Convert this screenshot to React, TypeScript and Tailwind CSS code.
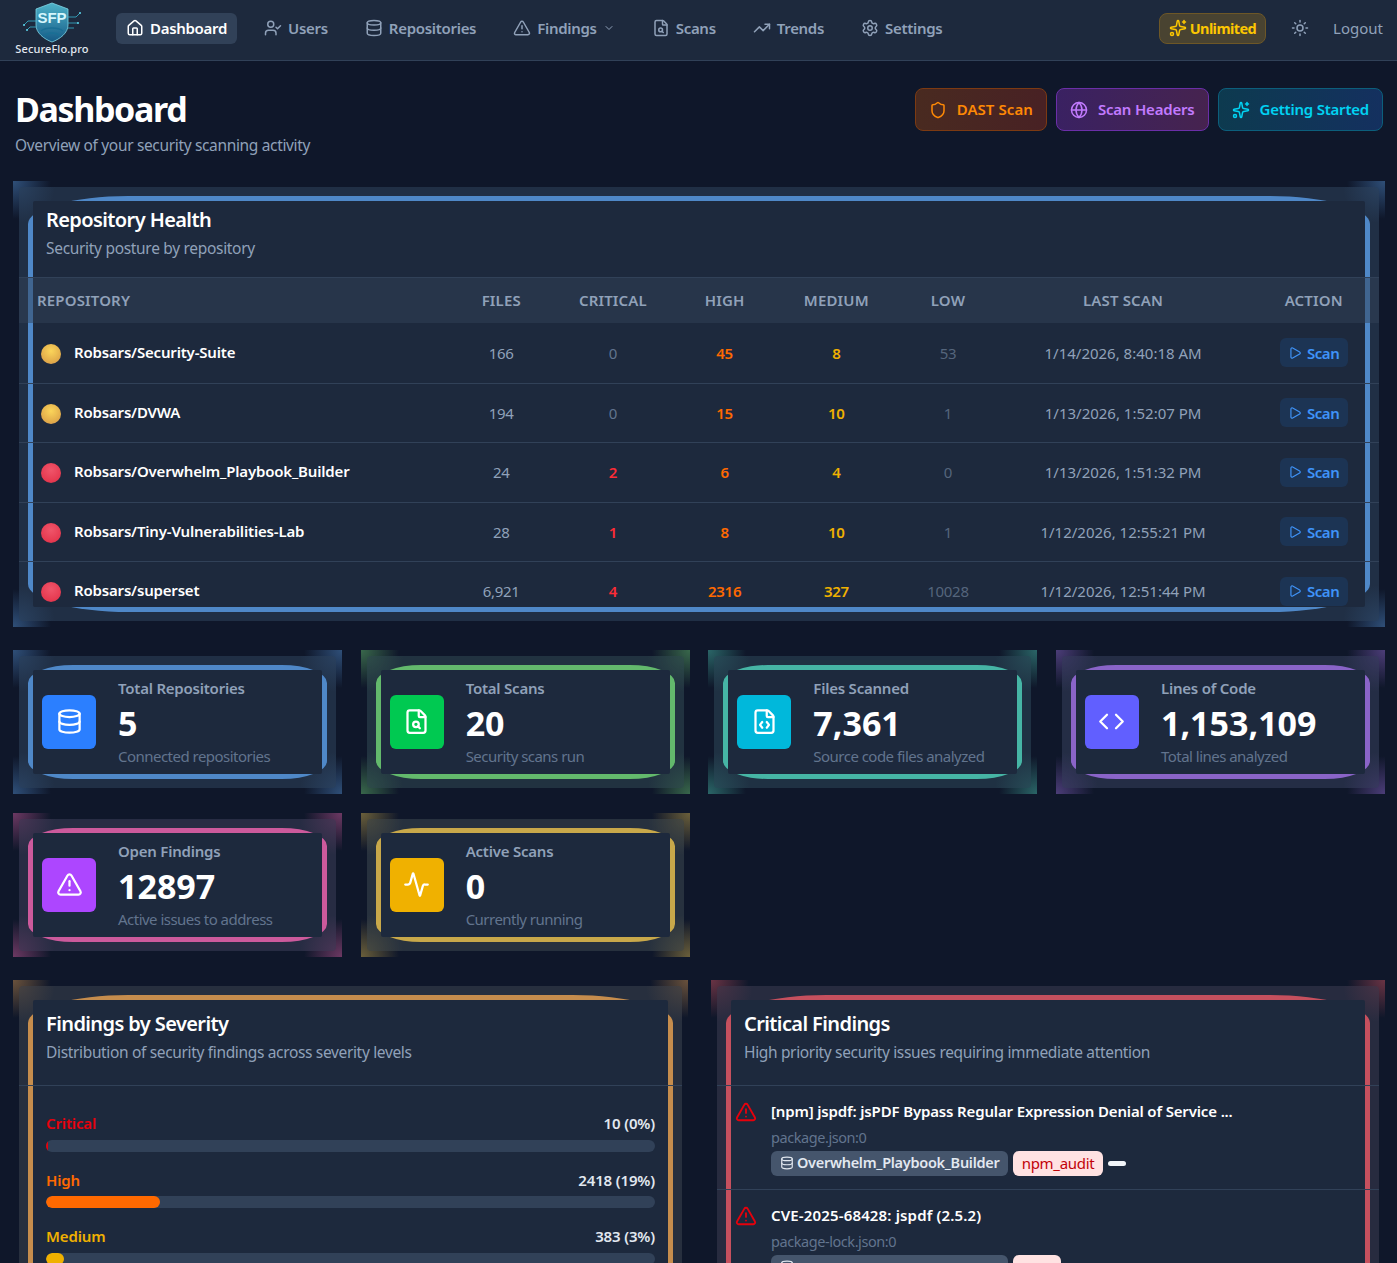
import React from "react";
import { House, UserCheck, Database, TriangleAlert, ChevronDown, FileSearch, TrendingUp, Settings, Sparkles, Sun, Shield, Globe, Play, FileCode, Code, Activity } from "lucide-react";

const glow =
  "bg-[radial-gradient(circle_at_0_0,color-mix(in_srgb,var(--c)_50%,transparent),transparent_38px),radial-gradient(circle_at_100%_0,color-mix(in_srgb,var(--c)_50%,transparent),transparent_38px),radial-gradient(circle_at_0_100%,color-mix(in_srgb,var(--c)_50%,transparent),transparent_38px),radial-gradient(circle_at_100%_100%,color-mix(in_srgb,var(--c)_50%,transparent),transparent_38px)]";
const glowSoft =
  "bg-[radial-gradient(circle_at_0_0,color-mix(in_srgb,var(--c)_20%,transparent),transparent_36px),radial-gradient(circle_at_100%_0,color-mix(in_srgb,var(--c)_20%,transparent),transparent_36px),radial-gradient(circle_at_0_100%,color-mix(in_srgb,var(--c)_20%,transparent),transparent_36px),radial-gradient(circle_at_100%_100%,color-mix(in_srgb,var(--c)_20%,transparent),transparent_36px)]";

function Frame({ tone, shape, className = "", children }: { tone: string; shape: string; className?: string; children: React.ReactNode }) {
  return (
    <div className={`p-[6px] ${glow} ${tone} ${className}`}>
      <div className={`relative h-full overflow-hidden rounded-[4px] bg-[color-mix(in_srgb,var(--c)_6%,#1d293d)] ${glowSoft}`}>
        <div className={`absolute inset-[9px] bg-[var(--c)] ${shape}`} />
        <div className="absolute inset-[14px] rounded-[2px] bg-slate-800" />
        <div className="relative h-full">{children}</div>
      </div>
    </div>
  );
}

function Logo() {
  return (
    <div className="flex w-[76px] flex-col items-center">
      <svg viewBox="0 0 60 42" className="h-[42px] w-[60px]" fill="none">
        <defs>
          <linearGradient id="sh" x1="0" y1="0" x2="0" y2="1">
            <stop offset="0" stopColor="#4fb3c9" />
            <stop offset="1" stopColor="#155a86" />
          </linearGradient>
        </defs>
        <path d="M30 2 L46 8 V24 C46 32 38 38 30 41 C22 38 14 32 14 24 V8 Z" fill="url(#sh)" stroke="#7fd6e6" strokeWidth="0.8" />
        <path d="M19 30 C24 26 36 26 41 30 M22 35 C26 31 34 31 38 35" stroke="#1a6f95" strokeWidth="1.4" />
        <path d="M14 20 H6 L2 24 M14 26 H8 L5 29 M46 16 H54 L58 12 M46 22 H56 M46 27 H52" stroke="#39b5d0" strokeWidth="0.8" />
        <circle cx="2" cy="24" r="1" fill="#5ed7ee" />
        <circle cx="5" cy="29" r="1" fill="#5ed7ee" />
        <circle cx="58" cy="12" r="1" fill="#5ed7ee" />
        <circle cx="56" cy="22" r="1" fill="#5ed7ee" />
        <text x="30" y="22" textAnchor="middle" fontSize="15" fontWeight="700" fill="#d5f6fc" fontFamily="'Liberation Sans',sans-serif">SFP</text>
      </svg>
      <span className="mt-[-1px] whitespace-nowrap text-[11px] leading-[14px] font-medium tracking-[0.01em] text-slate-200">SecureFlo.pro</span>
    </div>
  );
}

function NavItem({ icon, label, active, extra }: { icon: React.ReactNode; label: string; active?: boolean; extra?: React.ReactNode }) {
  return (
    <a className={`flex h-[31px] items-center gap-[6px] rounded-md px-[10px] text-[15px] font-semibold tracking-[-0.02em] ${active ? "bg-slate-700 text-white" : "text-slate-400"}`}>
      {icon}
      <span>{label}</span>
      {extra}
    </a>
  );
}

function Header() {
  const ic = "size-[18px] shrink-0";
  return (
    <header className="flex h-[61px] items-center border-b border-slate-700 bg-slate-800 pb-[4px] pl-[14px] pr-[14px]">
      <Logo />
      <nav className="ml-[26px] flex items-center gap-[17px]">
        <NavItem active icon={<House className={ic} />} label="Dashboard" />
        <NavItem icon={<UserCheck className={ic} />} label="Users" />
        <NavItem icon={<Database className={ic} />} label="Repositories" />
        <NavItem icon={<TriangleAlert className={ic} />} label="Findings" extra={<ChevronDown className="size-3" />} />
        <NavItem icon={<FileSearch className={ic} />} label="Scans" />
        <NavItem icon={<TrendingUp className={ic} />} label="Trends" />
        <NavItem icon={<Settings className={ic} />} label="Settings" />
      </nav>
      <div className="ml-auto flex items-center">
        <div className="flex h-[31px] items-center gap-[3px] rounded-lg border border-[#6d5727] bg-[#494331] px-[9px] text-[14.5px] font-bold tracking-[-0.04em] text-yellow-400">
          <Sparkles className="size-[18px]" />
          <span className="mt-[2px]">Unlimited</span>
        </div>
        <Sun className="ml-[25px] size-[18px] text-slate-400" />
        <span className="ml-[24px] text-[15px] text-slate-400">Logout</span>
      </div>
    </header>
  );
}

function ActionButton({ className, icon, label }: { className: string; icon: React.ReactNode; label: string }) {
  return (
    <button className={`flex h-[43px] items-center gap-[10px] rounded-lg border px-[13px] text-[15px] font-semibold ${className}`}>
      {icon}
      {label}
    </button>
  );
}

const cols = "grid grid-cols-[426.4px_repeat(5,111.7px)_238.5px_1fr] items-center text-center";
const amber = "bg-[radial-gradient(circle_at_50%_35%,#fbd55a,#e0a94a_70%,#d89a6a)]";
const crimson = "bg-[radial-gradient(circle_at_50%_35%,#f0556a,#e63950_70%,#b8324a)]";

const rows = [
  { dot: amber, name: "Robsars/Security-Suite", files: "166", c: "0", h: "45", m: "8", l: "53", t: "1/14/2026, 8:40:18 AM" },
  { dot: amber, name: "Robsars/DVWA", files: "194", c: "0", h: "15", m: "10", l: "1", t: "1/13/2026, 1:52:07 PM" },
  { dot: crimson, name: "Robsars/Overwhelm_Playbook_Builder", files: "24", c: "2", h: "6", m: "4", l: "0", t: "1/13/2026, 1:51:32 PM" },
  { dot: crimson, name: "Robsars/Tiny-Vulnerabilities-Lab", files: "28", c: "1", h: "8", m: "10", l: "1", t: "1/12/2026, 12:55:21 PM" },
  { dot: crimson, name: "Robsars/superset", files: "6,921", c: "4", h: "2316", m: "327", l: "10028", t: "1/12/2026, 12:51:44 PM" },
];

function RepoHealth() {
  return (
    <Frame tone="[--c:#4f88c8]" shape="rounded-[100px/28px]">
      <div className="h-[90px] pl-[27px] pt-[19px]">
        <h2 className="text-[20px] leading-[28px] font-semibold tracking-[-0.03em] text-white">Repository Health</h2>
        <p className="mt-[2px] text-[15.5px] leading-[24px] tracking-[-0.02em] text-slate-400">Security posture by repository</p>
      </div>
      <div className={`${cols} h-[46px] border-t border-slate-700 bg-slate-700/50 text-[15px] font-semibold tracking-[0.01em] text-slate-400`}>
        <div className="pl-[18px] text-left">REPOSITORY</div>
        <div>FILES</div>
        <div>CRITICAL</div>
        <div>HIGH</div>
        <div>MEDIUM</div>
        <div>LOW</div>
        <div>LAST SCAN</div>
        <div className="pl-[6px]">ACTION</div>
      </div>
      {rows.map((r, i) => (
        <div key={r.name} className={`${cols} h-[59.5px] text-[15px] ${i ? "border-t border-slate-700" : ""}`}>
          <div className="flex items-center gap-[13px] pl-[22px] text-left">
            <span className={`mt-[2px] size-5 rounded-full ${r.dot}`} />
            <span className="-mt-[2px] font-semibold tracking-[-0.012em] text-white">{r.name}</span>
          </div>
          <div className="tracking-[-0.02em] text-slate-400">{r.files}</div>
          <div className={r.c === "0" ? "text-slate-500" : "font-semibold text-red-500"}>{r.c}</div>
          <div className="font-semibold tracking-[-0.02em] text-orange-500">{r.h}</div>
          <div className="font-semibold tracking-[-0.02em] text-yellow-500">{r.m}</div>
          <div className="tracking-[-0.02em] text-[#55657c]">{r.l}</div>
          <div className="text-slate-400">{r.t}</div>
          <div className="flex justify-center pl-[6px]">
            <span className="flex h-[29px] w-[68px] items-center justify-center gap-[5px] rounded-md bg-[#1c3454] text-[15px] font-semibold tracking-[-0.03em] text-[#3f93f8]">
              <Play className="size-3.5" />
              Scan
            </span>
          </div>
        </div>
      ))}
    </Frame>
  );
}

function Stat({ tone, box, icon, title, value, sub }: { tone: string; box: string; icon: React.ReactNode; title: string; value: string; sub: string }) {
  return (
    <Frame tone={tone} shape="rounded-[45px/18px]" className="h-[144px]">
      <div className="flex h-full items-center pl-[23px]">
        <div className={`flex size-[54px] shrink-0 items-center justify-center rounded-md text-white ${box}`}>{icon}</div>
        <div className="ml-[22px]">
          <div className="text-[15px] leading-[22px] font-semibold tracking-[-0.015em] text-slate-400">{title}</div>
          <div className="mt-[3px] text-[34px] leading-[42px] font-bold text-white">{value}</div>
          <div className="mt-[1px] text-[15px] leading-[22px] tracking-[-0.035em] text-slate-500">{sub}</div>
        </div>
      </div>
    </Frame>
  );
}

function Bar({ label, value, width, text, fill }: { label: string; value: string; width: string; text: string; fill: string }) {
  return (
    <div className="h-[56.5px]">
      <div className="flex h-[26px] items-center justify-between text-[15px] font-semibold tracking-[-0.01em]">
        <span className={text}>{label}</span>
        <span className="text-slate-200">{value}</span>
      </div>
      <div className="mt-[3px] h-[12px] overflow-hidden rounded-full bg-slate-700">
        <div className={`h-full rounded-full ${fill} ${width}`} />
      </div>
    </div>
  );
}

function Finding({ title, titleTrack, file, repo, tag, tagW, dash }: { title: string; titleTrack: string; file: string; repo?: string; tag?: string; tagW: string; dash?: boolean }) {
  return (
    <div className="flex h-[104px] items-start border-t border-slate-700 pl-[18px]">
      <TriangleAlert className="mt-[15px] size-[22px] shrink-0 text-red-600" />
      <div className="ml-[14px] pt-[13px]">
        <div className={`text-[15px] leading-[24px] font-semibold text-white ${titleTrack}`}>{title}</div>
        <div className="mt-[2px] text-[14.5px] leading-[24px] tracking-[-0.03em] text-slate-500">{file}</div>
        <div className="mt-[2px] flex items-center gap-[5px]">
          <span className="flex h-[25px] w-[237px] items-center gap-[3px] rounded-md bg-slate-600 pl-[9px] text-[14.5px] font-semibold tracking-[-0.02em] text-slate-200">
            <Database className="size-3.5" />
            {repo}
          </span>
          <span className={`flex h-[25px] items-center justify-center rounded-md bg-red-100 text-[15px] tracking-[-0.02em] text-red-700 ${tagW}`}>{tag}</span>
          {dash && <span className="h-[5px] w-[18px] rounded-full bg-slate-100" />}
        </div>
      </div>
    </div>
  );
}

function SectionHead({ title, sub }: { title: string; sub: string }) {
  return (
    <div className="h-[99px] pl-[27px] pt-[24px]">
      <h2 className="text-[20px] leading-[28px] font-semibold tracking-[-0.03em] text-white">{title}</h2>
      <p className="mt-[2px] text-[15.5px] leading-[24px] tracking-[-0.022em] text-slate-400">{sub}</p>
    </div>
  );
}

export default function App() {
  const si = "size-[27px]";
  return (
    <div className="h-[1263px] overflow-hidden bg-[#0f172a] font-['Noto_Sans','Open_Sans',sans-serif]">
      <Header />
      <main className="pl-[13px] pr-[12px]">
        <div className="flex items-start justify-between px-[2px] pt-[27px]">
          <div>
            <h1 className="-mt-[1px] text-[34px] leading-[44px] font-bold tracking-[-0.04em] text-white">Dashboard</h1>
            <p className="mt-[2px] text-[15.5px] leading-[24px] tracking-[-0.022em] text-slate-400">Overview of your security scanning activity</p>
          </div>
          <div className="flex gap-[9px]">
            <ActionButton className="border-[#7c3a12] bg-gradient-to-r from-[#492a20] to-[#482124] tracking-[0.005em] text-orange-400" icon={<Shield className="size-[18px]" />} label="DAST Scan" />
            <ActionButton className="border-[#6b2fa8] bg-gradient-to-r from-[#3a2162] to-[#46234f] tracking-[-0.013em] text-purple-400" icon={<Globe className="size-[18px]" />} label="Scan Headers" />
            <ActionButton className="border-[#0c5f7c] bg-gradient-to-r from-[#0d3a4f] to-[#14305f] tracking-[-0.015em] text-cyan-400" icon={<Sparkles className="size-[18px]" />} label="Getting Started" />
          </div>
        </div>

        <div className="mt-[24px]">
          <RepoHealth />
        </div>

        <div className="mt-[23px] grid grid-cols-4 gap-x-[18.67px] gap-y-[19px]">
          <Stat tone="[--c:#4f88c8]" box="bg-blue-500" icon={<Database className={si} />} title="Total Repositories" value="5" sub="Connected repositories" />
          <Stat tone="[--c:#63b96c]" box="bg-green-500" icon={<FileSearch className={si} />} title="Total Scans" value="20" sub="Security scans run" />
          <Stat tone="[--c:#46b5a5]" box="bg-cyan-500" icon={<FileCode className={si} />} title="Files Scanned" value="7,361" sub="Source code files analyzed" />
          <Stat tone="[--c:#8a64c8]" box="bg-indigo-500" icon={<Code className={si} />} title="Lines of Code" value="1,153,109" sub="Total lines analyzed" />
          <Stat tone="[--c:#cc5a9c]" box="bg-purple-500" icon={<TriangleAlert className={si} />} title="Open Findings" value="12897" sub="Active issues to address" />
          <Stat tone="[--c:#c8a84a]" box="bg-yellow-500" icon={<Activity className={si} />} title="Active Scans" value="0" sub="Currently running" />
        </div>

        <div className="mt-[23px] grid grid-cols-[675px_674px] gap-[23px]">
          <Frame tone="[--c:#c68d4d]" shape="rounded-[100px/28px]" className="h-[500px]">
            <SectionHead title="Findings by Severity" sub="Distribution of security findings across severity levels" />
            <div className="border-t border-slate-700 pl-[27px] pr-[27px] pt-[25px]">
              <Bar label="Critical" value="10 (0%)" width="w-[2px]" text="text-red-600" fill="bg-red-600" />
              <Bar label="High" value="2418 (19%)" width="w-[18.7%]" text="text-orange-500" fill="bg-orange-500" />
              <Bar label="Medium" value="383 (3%)" width="w-[3%]" text="text-yellow-500" fill="bg-yellow-500" />
            </div>
          </Frame>
          <Frame tone="[--c:#c6505e]" shape="rounded-[100px/28px]" className="h-[500px]">
            <SectionHead title="Critical Findings" sub="High priority security issues requiring immediate attention" />
            <Finding title="[npm] jspdf: jsPDF Bypass Regular Expression Denial of Service ..." titleTrack="tracking-[-0.01em]" file="package.json:0" repo="Overwhelm_Playbook_Builder" tag="npm_audit" tagW="w-[90px]" dash />
            <Finding title="CVE-2025-68428: jspdf (2.5.2)" titleTrack="tracking-[0.01em]" file="package-lock.json:0" tagW="w-[48px]" />
          </Frame>
        </div>
      </main>
    </div>
  );
}
